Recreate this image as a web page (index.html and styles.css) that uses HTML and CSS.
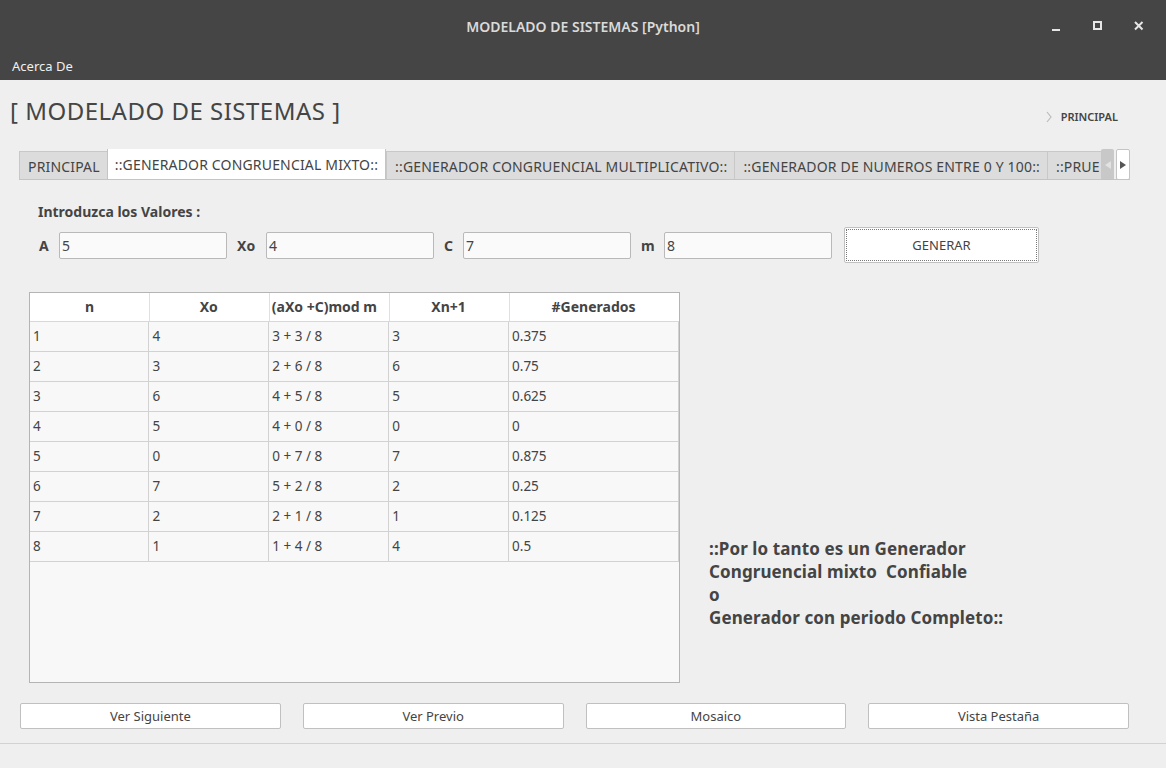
FILE: index.html
```html
<!DOCTYPE html>
<html lang="es">
<head>
<meta charset="utf-8">
<title>MODELADO DE SISTEMAS [Python]</title>
<link rel="stylesheet" href="styles.css">
</head>
<body>
<div class="window">
  <header class="titlebar">
    <div class="tb-spacer"></div>
    <div class="tb-title">MODELADO DE SISTEMAS [Python]</div>
    <div class="tb-controls">
      <svg class="ctl" width="12" height="12" viewBox="0 0 12 12"><rect x="1" y="9" width="8" height="2" fill="#e6e6e6"/></svg>
      <svg class="ctl" width="12" height="12" viewBox="0 0 12 12"><rect x="2" y="2" width="7" height="7" fill="none" stroke="#e6e6e6" stroke-width="2"/></svg>
      <svg class="ctl" width="12" height="12" viewBox="0 0 12 12"><path d="M2 2 L9.5 9.5 M9.5 2 L2 9.5" stroke="#e6e6e6" stroke-width="2"/></svg>
    </div>
  </header>
  <nav class="menubar"><span class="menu-item">Acerca De</span></nav>

  <main class="content">
    <div class="heading-row">
      <h1 class="app-title">[ MODELADO DE SISTEMAS ]</h1>
      <div class="crumb"><svg class="crumb-arrow" width="6" height="12" viewBox="0 0 6 12"><path d="M1 1 L5 6 L1 11" fill="none" stroke="#bbb" stroke-width="1.2"/></svg>PRINCIPAL</div>
    </div>

    <div class="tabs">
      <div class="tab">PRINCIPAL</div>
      <div class="tab active">::GENERADOR CONGRUENCIAL MIXTO::</div>
      <div class="tab">::GENERADOR CONGRUENCIAL MULTIPLICATIVO::</div>
      <div class="tab">::GENERADOR DE NUMEROS ENTRE 0 Y 100::</div>
      <div class="tab cut"><span class="cut-text">::PRUE</span></div>
      <div class="tab-scroll left"><i class="tri tri-left"></i></div>
      <div class="tab-scroll right"><i class="tri tri-right"></i></div>
    </div>

    <section class="form">
      <div class="form-title">Introduzca los Valores :</div>
      <div class="form-row">
        <label class="lbl lbl-a">A</label><div class="input">5</div>
        <label class="lbl lbl-xo">Xo</label><div class="input">4</div>
        <label class="lbl lbl-c">C</label><div class="input">7</div>
        <label class="lbl lbl-m">m</label><div class="input">8</div>
        <button class="btn-generar">GENERAR</button>
      </div>
    </section>

    <div class="mid">
      <div class="table-box">
        <table class="grid">
          <thead>
            <tr><th class="c1">n</th><th>Xo</th><th class="left">(aXo +C)mod m</th><th>Xn+1</th><th class="c5">#Generados</th></tr>
          </thead>
          <tbody>
            <tr><td>1</td><td>4</td><td>3 + 3 / 8</td><td>3</td><td>0.375</td></tr>
            <tr><td>2</td><td>3</td><td>2 + 6 / 8</td><td>6</td><td>0.75</td></tr>
            <tr><td>3</td><td>6</td><td>4 + 5 / 8</td><td>5</td><td>0.625</td></tr>
            <tr><td>4</td><td>5</td><td>4 + 0 / 8</td><td>0</td><td>0</td></tr>
            <tr><td>5</td><td>0</td><td>0 + 7 / 8</td><td>7</td><td>0.875</td></tr>
            <tr><td>6</td><td>7</td><td>5 + 2 / 8</td><td>2</td><td>0.25</td></tr>
            <tr><td>7</td><td>2</td><td>2 + 1 / 8</td><td>1</td><td>0.125</td></tr>
            <tr><td>8</td><td>1</td><td>1 + 4 / 8</td><td>4</td><td>0.5</td></tr>
          </tbody>
        </table>
      </div>
      <div class="message">::Por lo tanto es un Generador<br>Congruencial mixto&nbsp; Confiable<br>o<br>Generador con periodo Completo::</div>
    </div>

    <div class="buttons">
      <button class="btn">Ver Siguiente</button>
      <button class="btn">Ver Previo</button>
      <button class="btn">Mosaico</button>
      <button class="btn">Vista Pestaña</button>
    </div>
  </main>
  <footer class="statusbar"></footer>
</div>
</body>
</html>
```

FILE: styles.css
```css
* { box-sizing: border-box; }
html, body { margin: 0; padding: 0; }
body {
  background: #efefef;
  font-family: "Noto Sans", "Open Sans", sans-serif;
  color: #444;
  width: 1166px;
  height: 768px;
  overflow: hidden;
}
.window { display: flex; flex-direction: column; height: 768px; }

.titlebar {
  height: 52px;
  background: #454545;
  display: grid;
  grid-template-columns: 1fr auto 1fr;
  align-items: center;
}
.tb-title {
  color: #dadada;
  font-size: 14px;
  font-weight: 600;
  padding-top: 1px;
}
.tb-controls {
  display: flex;
  justify-content: flex-end;
  gap: 29px;
  padding-right: 21px;
}
.ctl { display: block; }

.menubar {
  height: 28px;
  background: #454545;
  padding-left: 12px;
  display: flex;
  align-items: center;
}
.menu-item { color: #f0f0f0; font-size: 13px; padding-bottom: 1px; }

.content { flex: 1; display: flex; flex-direction: column; }

.heading-row {
  display: flex;
  justify-content: space-between;
  align-items: flex-start;
  height: 69px;
}
.app-title {
  margin: 14px 0 0 10px;
  font-size: 24px;
  font-weight: 400;
  color: #454545;
  letter-spacing: 0.5px;
}
.crumb {
  margin: 29px 48px 0 0;
  font-size: 11px;
  font-weight: 600;
  color: #444;
  display: flex;
  align-items: center;
}
.crumb-arrow { display: block; margin-right: 9px; }

.tabs {
  margin: 0 36px 0 19px;
  height: 31px;
  display: flex;
  align-items: flex-end;
  border-bottom: 1px solid #c4c4c4;
  overflow: hidden;
}
.tab {
  height: 29px;
  padding: 0 7px 0 8px;
  background: #dcdcdc;
  border: 1px solid #c8c8c8;
  border-bottom: none;
  border-right: none;
  font-size: 14px;
  letter-spacing: 0.17px;
  color: #444;
  display: flex;
  align-items: center;
  white-space: nowrap;
  margin-bottom: -1px;
  flex: none;
}
.tab.active {
  height: 33px;
  background: #fff;
  border: 1px solid #c4c4c4;
  border-bottom: none;
  border-radius: 2px 2px 0 0;
  padding: 1px 7px 0;
}
.tab.cut { flex: 1 1 0; min-width: 0; overflow: hidden; padding-right: 0; }
.cut-text { display: block; overflow: hidden; }
.tab-scroll {
  height: 31px;
  width: 14px;
  display: flex;
  align-items: center;
  justify-content: center;
  margin-bottom: -1px;
  flex: none;
}
.tab-scroll.left { background: #c8c8c8; border-radius: 2px; width: 13px; }
.tab-scroll.right { background: #fff; border: 1px solid #c4c4c4; border-radius: 2px; margin-left: 2px; }
.tri { display: block; width: 0; height: 0; border-top: 4px solid transparent; border-bottom: 4px solid transparent; }
.tri-left { border-right: 6px solid #e2e2e2; }
.tri-right { border-left: 6px solid #555; }

.form { padding: 22px 0 0 38px; }
.form-title { font-size: 14px; font-weight: 700; color: #444; height: 19px; }
.form-row {
  display: flex;
  align-items: center;
  margin-top: 6px;
  margin-left: 1px;
}
.lbl { font-size: 14px; font-weight: 700; color: #444; }
.lbl-a { width: 20px; }
.lbl-xo { margin-left: 10px; width: 29px; }
.lbl-c { margin-left: 10px; width: 19px; }
.lbl-m { margin-left: 10px; width: 23px; }
.input {
  width: 168px;
  height: 27px;
  background: #fafafa;
  border: 1px solid #b9b9b9;
  border-radius: 2px;
  font-size: 14px;
  padding: 3px 2px;
  color: #444;
  font-family: "Noto Sans", sans-serif;
}
.btn-generar {
  margin-left: 12px;
  width: 195px;
  height: 36px;
  background: #fff;
  border: 1px solid #c0c0c0;
  border-radius: 2px;
  outline: 1px dotted #777;
  outline-offset: -3px;
  font-family: "Noto Sans", sans-serif;
  font-size: 13px;
  color: #444;
}

.mid {
  display: flex;
  margin-top: 29px;
  align-items: flex-start;
}
.table-box {
  margin-left: 29px;
  width: 651px;
  height: 391px;
  background: #f8f8f8;
  border: 1px solid #b4b4b4;
}
.grid {
  border-collapse: collapse;
  font-size: 13.5px;
  table-layout: fixed;
}
.grid th {
  height: 28px;
  background: #fff;
  font-weight: 700;
  font-size: 14px;
  color: #444;
  width: 120px;
  text-align: center;
  padding: 0;
  border-bottom: 1px solid #d8d8d8;
}
.grid th.c1 { width: 119px; }
.grid th.c5 { width: 170px; }
.grid th + th { box-shadow: inset 1px 0 0 0 #e0e0e0; }
.grid th.left { text-align: left; padding-left: 3px; }
.grid td {
  height: 30px;
  padding: 0 3px;
  border: 1px solid #d2d2d2;
  border-top: none;
  color: #444;
  font-weight: 400;
  white-space: nowrap;
}
.grid td:first-child { border-left: none; }

.message {
  margin: 245px 0 0 29px;
  font-size: 17px;
  font-weight: 700;
  line-height: 23px;
  color: #444;
  letter-spacing: 0.1px;
}

.buttons {
  display: grid;
  grid-template-columns: repeat(4, 1fr);
  column-gap: 22px;
  margin: 20px 37px 0 20px;
}
.btn {
  height: 26px;
  background: #fff;
  border: 1px solid #c0c0c0;
  border-radius: 2px;
  font-family: "Noto Sans", sans-serif;
  font-size: 13px;
  color: #444;
}

.statusbar {
  height: 25px;
  margin-top: auto;
  border-top: 1px solid #d2d2d2;
  background: #efefef;
}
```
